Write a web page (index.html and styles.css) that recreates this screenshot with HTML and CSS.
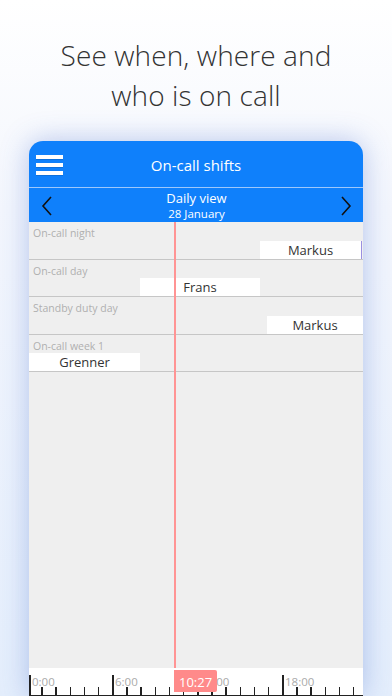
FILE: index.html
```html
<!DOCTYPE html>
<html>
<head>
  <title>On-call shifts</title>
  <meta charset="utf-8">
  <link rel="stylesheet" href="styles.css">
</head>
<body>
  <h1 class="headline">See when, where and<br>who is on call</h1>

  <div class="phone">
    <div class="topbar">
      <div class="burger">
        <span></span>
        <span></span>
        <span></span>
      </div>
      <div class="title">On-call shifts</div>
      <div></div>
    </div>

    <div class="navbar">
      <svg class="chevron" width="12" height="20" viewBox="0 0 12 20">
        <path d="M10 1 L2 10 L10 19" fill="none" stroke="#111" stroke-width="1.6"/>
      </svg>
      <div class="day">
        <div class="view">Daily view</div>
        <div class="date">28 January</div>
      </div>
      <svg class="chevron" width="12" height="20" viewBox="0 0 12 20">
        <path d="M2 1 L10 10 L2 19" fill="none" stroke="#111" stroke-width="1.6"/>
      </svg>
    </div>

    <div class="board">
      <div class="row">
        <div class="label">On-call night</div>
        <div class="shift edge" style="margin-left: 231px; width: 102px;">Markus</div>
      </div>
      <div class="row">
        <div class="label">On-call day</div>
        <div class="shift" style="margin-left: 111px; width: 120px;">Frans</div>
      </div>
      <div class="row">
        <div class="label">Standby duty day</div>
        <div class="shift" style="margin-left: 238px; width: 96px;">Markus</div>
      </div>
      <div class="row">
        <div class="label">On-call week 1</div>
        <div class="shift" style="margin-left: 0; width: 111px;">Grenner</div>
      </div>
      <div class="now-line" style="left: 145px;"></div>
    </div>

    <div class="timeline">
      <div class="ticks"></div>
      <div class="major" style="left: 0;"><span>0:00</span></div>
      <div class="major" style="left: 83px;"><span>6:00</span></div>
      <div class="major" style="left: 168px;"><span>12:00</span></div>
      <div class="major" style="left: 253px;"><span>18:00</span></div>
      <div class="now-badge" style="left: 145px;">10:27</div>
    </div>
  </div>
</body>
</html>
```

FILE: styles.css
```css
html, body {
  height: 100%;
}

body {
  margin: 0;
  overflow: hidden;
  font-family: 'Open Sans', 'Noto Sans', sans-serif;
  background: linear-gradient(to bottom, #ffffff 0%, #f3f6fd 30%, #e4eefc 100%);
}

.headline {
  margin: 0;
  padding-top: 35px;
  font-size: 28px;
  font-weight: 300;
  line-height: 40px;
  text-align: center;
  color: #333;
  letter-spacing: 0.1px;
}

.phone {
  margin: 26px 29px 0;
  height: 555px;
  background: #efefef;
  border-radius: 14px 14px 0 0;
  box-shadow: 0 0 28px rgba(60, 100, 200, 0.35);
  display: flex;
  flex-direction: column;
  overflow: hidden;
}

.topbar {
  height: 46px;
  flex: none;
  background: #0f80fb;
  border-bottom: 1px solid #9ec8fb;
  display: grid;
  grid-template-columns: 1fr auto 1fr;
  align-items: center;
}

.burger {
  display: flex;
  flex-direction: column;
  gap: 4px;
  padding-left: 7px;
  padding-top: 1px;
}

.burger span {
  display: block;
  width: 27px;
  height: 4px;
  background: #fff;
  box-shadow: 0 1px 0 rgba(0, 0, 0, 0.12);
}

.title {
  color: #fff;
  font-size: 15px;
  padding-top: 2px;
}

.navbar {
  height: 34px;
  flex: none;
  background: #0f80fb;
  display: flex;
  align-items: center;
  justify-content: space-between;
  padding: 0 11px 0 12px;
}

.chevron {
  display: block;
  margin-top: 1px;
}

.day {
  text-align: center;
  color: #fff;
}

.view {
  font-size: 13px;
  line-height: 16px;
}

.date {
  font-size: 11.5px;
  line-height: 15px;
}

.board {
  flex: 1;
  position: relative;
}

.row {
  height: 37.5px;
  box-sizing: border-box;
  border-bottom: 1.5px solid #c6c6c6;
  display: flex;
  flex-direction: column;
  justify-content: space-between;
}

.label {
  font-size: 10.5px;
  line-height: 14px;
  padding: 4px 0 0 4px;
  color: #b0b0b0;
}

.shift {
  height: 18px;
  box-sizing: border-box;
  background: #fff;
  font-size: 13px;
  line-height: 18px;
  text-align: center;
  color: #333;
}

.shift.edge {
  border-right: 1px solid #9a90e0;
}

.now-line {
  position: absolute;
  top: 0;
  bottom: 0;
  width: 2px;
  background: #ff9494;
}

.timeline {
  height: 27px;
  flex: none;
  background: #fff;
  position: relative;
  border-bottom: 1px solid #222;
}

.ticks {
  position: absolute;
  left: -2px;
  right: 0;
  bottom: 0;
  height: 8px;
  background: repeating-linear-gradient(to right, #222 0, #222 1.5px, transparent 1.5px, transparent 14.1667px);
}

.major {
  position: absolute;
  bottom: 0;
  height: 20px;
  width: 1.5px;
  background: #222;
}

.major span {
  position: absolute;
  left: 3px;
  top: 0;
  font-size: 11.5px;
  line-height: 14px;
  color: #aaa;
  white-space: nowrap;
}

.now-badge {
  position: absolute;
  top: 2px;
  height: 22px;
  padding: 0 5px 0 5px;
  background: #ff8a8a;
  border-radius: 0 2px 2px 0;
  color: #fff;
  font-size: 13px;
  line-height: 24px;
}
```
